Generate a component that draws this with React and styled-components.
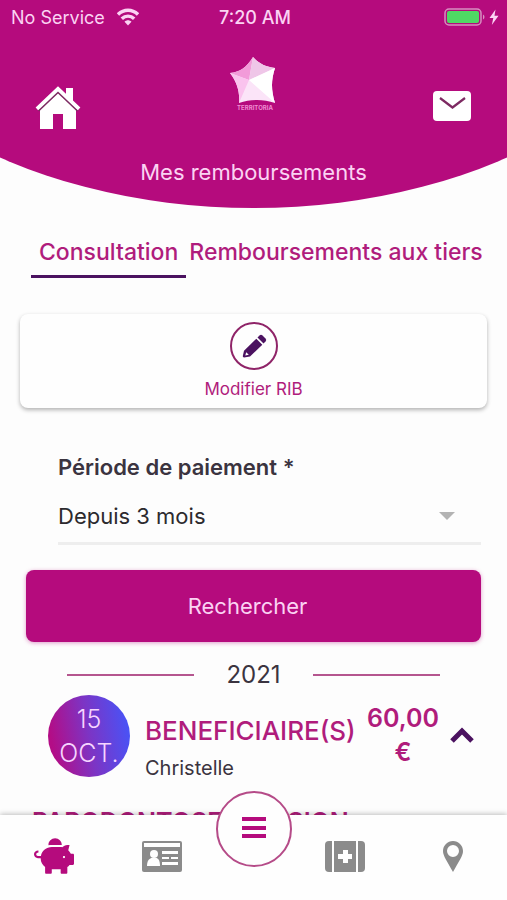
import { useState } from "react";
import styled, { createGlobalStyle } from "styled-components";
import { FaPiggyBank } from "react-icons/fa";

const colors = {
    primary: "#b50b7d",
    dark: "#4b1260",
    pinkText: "#b01c7c",
    tint: "#fbd3f3",
    text: "#3b3440",
    grey: "#8b8b8b",
};

const GlobalStyle = createGlobalStyle`
    * {
        box-sizing: border-box;
    }
    body {
        margin: 0;
        background-color: #fdfdfd;
        color: ${colors.text};
        font-family: Inter, "Liberation Sans", sans-serif;
    }
    button, select {
        font-family: inherit;
        border: none;
        padding: 0;
        background: none;
        color: inherit;
        cursor: pointer;
    }
    svg {
        display: block;
    }
`;

const Page = styled.div`
    display: flex;
    flex-direction: column;
    height: 100vh;
    overflow: hidden;
`;

const Header = styled.header`
    display: flex;
    flex-direction: column;
    flex-shrink: 0;
    height: 208px;
    color: ${colors.tint};
    background-color: ${colors.primary};
    clip-path: ellipse(87% 278px at 50% -70px);
`;

const StatusBar = styled.div`
    display: grid;
    grid-template-columns: 1fr auto 1fr;
    align-items: center;
    height: 34px;
    padding: 0 8px 0 11px;
    font-size: 18px;
`;

const StatusGroup = styled.div`
    display: flex;
    align-items: center;
    gap: 12px;
    justify-content: ${({ $end }) => ($end ? "flex-end" : "flex-start")};
`;

const Clock = styled.span`
    font-weight: 500;
`;

const HeaderRow = styled.div`
    display: flex;
    justify-content: space-between;
    align-items: flex-end;
    height: 98px;
    padding: 0 31px 0 34px;
`;

const IconButton = styled.button`
    display: flex;
    align-items: center;
    justify-content: center;
    width: 48px;
    height: 48px;
`;

const Logo = styled.svg`
    align-self: flex-start;
    margin-top: 19px;
`;

const Title = styled.h1`
    margin: 27px 0 0;
    font-size: 22px;
    line-height: 26px;
    font-weight: 400;
    text-align: center;
`;

const Content = styled.main`
    flex: 1;
    min-height: 0;
    overflow: hidden;
    padding: 28px 20px 0;
`;

const Tabs = styled.div`
    display: flex;
    margin: 0 5px 0 11px;
    overflow: hidden;
`;

const Tab = styled.button`
    flex-shrink: 0;
    height: 42px;
    padding: 0 ${({ $active }) => ($active ? "8px" : "3px")} 8px;
    font-size: 23px;
    font-weight: 500;
    white-space: nowrap;
    color: ${colors.pinkText};
    border-bottom: 3px solid ${({ $active }) => ($active ? colors.dark : "transparent")};
`;

const RibCard = styled.button`
    display: flex;
    flex-direction: column;
    align-items: center;
    gap: 8px;
    width: 100%;
    height: 94px;
    margin-top: 36px;
    padding-top: 8px;
    font-size: 17px;
    line-height: 22px;
    color: ${colors.pinkText};
    background-color: #fefefe;
    border-radius: 8px;
    box-shadow: 0 2px 4px rgba(0, 0, 0, 0.3);
`;

const RoundIcon = styled.span`
    display: flex;
    align-items: center;
    justify-content: center;
    width: 48px;
    height: 48px;
    border: 2px solid #8f2468;
    border-radius: 50%;
`;

const Form = styled.form`
    padding: 0 6px;
`;

const Field = styled.div`
    display: flex;
    flex-direction: column;
    margin: 45px 0 25px 32px;
    border-bottom: 3px solid #eeeeee;
`;

const Label = styled.label`
    font-size: 22px;
    line-height: 28px;
    font-weight: 600;
`;

const SelectRow = styled.div`
    display: flex;
    align-items: center;
    height: 52px;
    margin-top: 9px;
    padding-right: 26px;
`;

const Select = styled.select`
    flex: 1;
    height: 100%;
    appearance: none;
    outline: none;
    font-size: 22px;
    color: #2c2a2e;
`;

const SubmitButton = styled.button`
    width: 100%;
    height: 72px;
    padding-right: 12px;
    font-size: 22px;
    color: ${colors.tint};
    background-color: ${colors.primary};
    border-radius: 8px;
    box-shadow: 0 1px 4px rgba(181, 11, 125, 0.4);
`;

const YearDivider = styled.h2`
    display: flex;
    align-items: center;
    gap: 32px;
    margin: 18px 47px 0;
    font-size: 24px;
    line-height: 30px;
    font-weight: 400;

    &::before,
    &::after {
        content: "";
        flex: 1;
        height: 2px;
        background-color: #b5568f;
    }
`;

const Refund = styled.article`
    display: flex;
    align-items: flex-start;
    margin-top: 5px;
    padding: 0 13px 0 28px;
`;

const DateBadge = styled.time`
    display: flex;
    flex-direction: column;
    align-items: center;
    justify-content: center;
    flex-shrink: 0;
    width: 82px;
    height: 82px;
    font-size: 25px;
    line-height: 34px;
    font-weight: 300;
    color: #f6d5ff;
    border-radius: 50%;
    background: linear-gradient(80deg, #b30d86 10%, #7d34c4 50%, #4a52f5 92%);
`;

const Beneficiary = styled.div`
    flex: 1;
    margin: 16px 0 0 15px;
`;

const BeneficiaryLabel = styled.h3`
    margin: 0;
    font-size: 26px;
    line-height: 40px;
    font-weight: 500;
    color: ${colors.pinkText};
`;

const Name = styled.p`
    margin: 0;
    font-size: 20px;
    line-height: 34px;
`;

const Amount = styled.strong`
    width: 84px;
    margin: 6px 5px 0 0;
    font-size: 25px;
    line-height: 34px;
    font-weight: 600;
    text-align: center;
    color: ${colors.pinkText};
`;

const CollapseButton = styled.button`
    align-self: center;
`;

const CareTitle = styled.h4`
    margin: 22px 12px 0;
    font-size: 25px;
    line-height: 30px;
    font-weight: 600;
    white-space: nowrap;
    color: ${colors.pinkText};
`;

const BottomNav = styled.nav`
    position: relative;
    display: grid;
    grid-template-columns: 1fr 1fr 76px 1fr 1fr;
    flex-shrink: 0;
    height: 85px;
    background-color: #fefefe;
    box-shadow: 0 -1px 5px rgba(0, 0, 0, 0.25);
`;

const NavButton = styled.button`
    display: flex;
    align-items: center;
    justify-content: center;
    height: 82px;
    color: ${({ $active }) => ($active ? colors.primary : colors.grey)};
`;

const MenuButton = styled.button`
    display: flex;
    align-items: center;
    justify-content: center;
    width: 76px;
    height: 76px;
    margin-top: -24px;
    color: ${colors.primary};
    background-color: #fefefe;
    border: 2px solid #b54b88;
    border-radius: 50%;
`;

const WifiIcon = () => (
    <svg width="22" height="18" viewBox="0 0 22 18" fill="none" stroke="currentColor" strokeWidth="3.4">
        <path d="M1 6.5C6.700.800 15.300.800 21 6.500" />
        <path d="M4.800 10.800C8.400 7.200 13.600 7.200 17.200 10.800" />
        <path d="M11 17.500 7.500 13.800C9.600 11.800 12.400 11.800 14.500 13.800Z" fill="currentColor" stroke="none" />
    </svg>
);

const BatteryIcon = () => (
    <svg width="55" height="20" viewBox="0 0 55 20">
        <rect x="1" y="2" width="36" height="16" rx="4" fill="none" stroke="#d68fc0" strokeWidth="1.500" />
        <rect x="3" y="4" width="32" height="12" rx="2" fill="#4fd964" />
        <path d="M39 7.500C41 8.500 41 11.500 39 12.500Z" fill="#d68fc0" />
        <path d="M51.500 2.500 45.500 11H49.300L47.800 18 54.500 8.800H50.500Z" fill={colors.tint} />
    </svg>
);

const HomeIcon = () => (
    <svg width="46" height="44" viewBox="0 0 46 44">
        <path d="M5 21 23 4 41 21V43H28V28H18V43H5Z" fill="#fff" />
        <path d="M31 2H38V17L31 10Z" fill="#fff" />
        <path d="M2 23 23 3 44 23" fill="none" stroke="#fff" strokeWidth="4" />
        <path d="M3.500 25 23 6.500 42.500 25" fill="none" stroke="#7d2a62" strokeWidth="1.600" />
    </svg>
);

const MailIcon = () => (
    <svg width="40" height="36" viewBox="0 0 40 36">
        <rect x="1" y="1" width="38" height="30" rx="4" fill="#fff" />
        <path d="M8 8 20.500 17.500 33 8" fill="none" stroke="#7d2a62" strokeWidth="2.200" />
    </svg>
);

const StarLogo = () => (
    <Logo width="50" height="58" viewBox="1 0 50 58" role="img" aria-label="Territoria">
        <path d="M24 4C30 11 37 14 46 15C42 27 42 37 46 50C34 46 22 46 10 50C11 39 8 29 1 20C11 19 18 14 24 4Z" fill="#fbe4f8" />
        <path d="M24 4C18 14 11 19 1 20L20 27Z" fill="#f29bd9" />
        <path d="M24 4 20 27 46 15C37 14 30 11 24 4Z" fill="#efc6e8" />
        <path d="M1 20 20 27 10 50C11 39 8 29 1 20Z" fill="#fac3ee" />
        <path d="M46 15 20 27 46 50C42 37 42 27 46 15Z" fill="#fff" />
        <text x="26" y="57" fontSize="6" fontWeight="700" textAnchor="middle" fill="#f08bd2">TERRITORIA</text>
    </Logo>
);

const PencilIcon = () => (
    <svg width="26" height="26" viewBox="0 0 26 26" fill={colors.dark}>
        <path d="M18.500 2.500Q20 1 21.500 2.500L24.500 5.500Q26 7 24.500 8.500L22.500 10.500 16.500 4.500Z" />
        <path fillRule="evenodd" d="M15.300 5.700 21.300 11.700 9 23.500 3 24.500Q1.600 24.500 1.800 23L3 17.700ZM5.200 19.200 4.300 22.400 7.800 21.700Z" />
    </svg>
);

const ArrowDown = () => (
    <svg width="16" height="10" viewBox="0 0 16 10">
        <path d="M0 1H16L8 9Z" fill="#b3b3b3" />
    </svg>
);

const ChevronUp = () => (
    <svg width="24" height="28" viewBox="0 0 24 28" fill="none" stroke={colors.dark} strokeWidth="5">
        <path d="M2 15 12 5 22 15" />
    </svg>
);

const CardIcon = () => (
    <svg width="40" height="32" viewBox="0 0 40 32">
        <rect x="0" y="1" width="40" height="31" rx="2" fill="currentColor" />
        <g fill="#fff">
            <rect x="2" y="3" width="36" height="4" />
            <circle cx="12" cy="14" r="4" />
            <path d="M5 26C5 20 8 18 10 18H14C16 18 18 20 18 26Z" />
            <rect x="20" y="11" width="16" height="3" />
            <rect x="20" y="17" width="7" height="2" />
            <rect x="29" y="17" width="7" height="2" />
            <rect x="20" y="22" width="16" height="3" />
        </g>
    </svg>
);

const KitIcon = () => (
    <svg width="40" height="32" viewBox="0 0 40 32" fill="currentColor">
        <path d="M4 1H7V32H4Q0 32 0 28V5Q0 1 4 1Z" />
        <path d="M33 1H36Q40 1 40 5V28Q40 32 36 32H33Z" />
        <rect x="9" y="1" width="22" height="31" />
        <path d="M18 10H23V14H27V19H23V23H18V19H13V14H18Z" fill="#fff" />
    </svg>
);

const PinIcon = () => (
    <svg width="20" height="32" viewBox="0 0 20 32" fill="currentColor">
        <path fillRule="evenodd" d="M10 1C15.500 1 20 5.500 20 11C20 16 16 21 10 32C4 21 0 16 0 11C0 5.500 4.500 1 10 1ZM10 5A6 6 0 1 0 10 17A6 6 0 1 0 10 5Z" />
    </svg>
);

const MenuIcon = () => (
    <svg width="26" height="24" viewBox="0 0 26 24" fill="currentColor">
        <rect x="1" y="0" width="24" height="4" />
        <rect x="1" y="9" width="24" height="4" />
        <rect x="1" y="17" width="24" height="4" />
    </svg>
);

const tabs = ["Consultation", "Remboursements aux tiers"];

const App = () => {
    const [activeTab, setActiveTab] = useState(tabs[0]);

    return (
        <>
            <GlobalStyle />
            <Page>
                <Header>
                    <StatusBar>
                        <StatusGroup>
                            <span>No Service</span>
                            <WifiIcon />
                        </StatusGroup>
                        <Clock>7:20 AM</Clock>
                        <StatusGroup $end>
                            <BatteryIcon />
                        </StatusGroup>
                    </StatusBar>
                    <HeaderRow>
                        <IconButton aria-label="Accueil"><HomeIcon /></IconButton>
                        <StarLogo />
                        <IconButton aria-label="Messages"><MailIcon /></IconButton>
                    </HeaderRow>
                    <Title>Mes remboursements</Title>
                </Header>
                <Content>
                    <Tabs role="tablist">
                        {tabs.map((tab) => (
                            <Tab
                                key={tab}
                                role="tab"
                                aria-selected={tab === activeTab}
                                $active={tab === activeTab}
                                onClick={() => setActiveTab(tab)}
                            >
                                {tab}
                            </Tab>
                        ))}
                    </Tabs>
                    <RibCard>
                        <RoundIcon><PencilIcon /></RoundIcon>
                        Modifier RIB
                    </RibCard>
                    <Form onSubmit={(e) => e.preventDefault()}>
                        <Field>
                            <Label htmlFor="period">Période de paiement *</Label>
                            <SelectRow>
                                <Select id="period">
                                    <option>Depuis 3 mois</option>
                                </Select>
                                <ArrowDown />
                            </SelectRow>
                        </Field>
                        <SubmitButton type="submit">Rechercher</SubmitButton>
                    </Form>
                    <YearDivider>2021</YearDivider>
                    <Refund>
                        <DateBadge dateTime="2021-10-15">
                            <span>15</span>
                            <span>OCT.</span>
                        </DateBadge>
                        <Beneficiary>
                            <BeneficiaryLabel>BENEFICIAIRE(S)</BeneficiaryLabel>
                            <Name>Christelle</Name>
                        </Beneficiary>
                        <Amount>60,00 €</Amount>
                        <CollapseButton aria-label="Replier"><ChevronUp /></CollapseButton>
                    </Refund>
                    <CareTitle>PARODONTOSE, INCISION</CareTitle>
                </Content>
                <BottomNav>
                    <NavButton $active aria-label="Remboursements"><FaPiggyBank size={40} /></NavButton>
                    <NavButton aria-label="Carte"><CardIcon /></NavButton>
                    <MenuButton aria-label="Menu"><MenuIcon /></MenuButton>
                    <NavButton aria-label="Soins"><KitIcon /></NavButton>
                    <NavButton aria-label="Localisation"><PinIcon /></NavButton>
                </BottomNav>
            </Page>
        </>
    );
};

export default App;
